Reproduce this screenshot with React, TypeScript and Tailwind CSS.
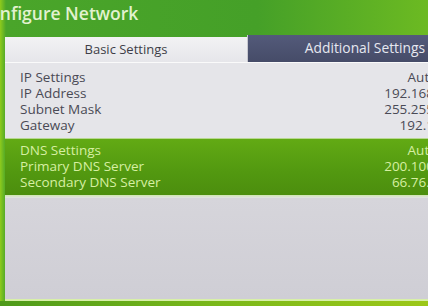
import React from "react";

const topRows = [
  ["IP Settings", "Automatic"],
  ["IP Address", "192.168.1.100"],
  ["Subnet Mask", "255.255.255.0"],
  ["Gateway", "192.168.1.1"],
];

const dnsRows = [
  ["DNS Settings", "Automatic"],
  ["Primary DNS Server", "200.100.100.1"],
  ["Secondary DNS Server", "66.76.100.10"],
];

export default function App() {
  return (
    <div
      className="relative w-[428px] h-[306px] overflow-hidden bg-[linear-gradient(90deg,#8fcb1c_0px,#4aa52a_6px,#45a028_60%,#6cba22_100%)]"
      style={{ fontFamily: '"Open Sans", "Noto Sans", sans-serif' }}
    >
      {/* Title */}
      <div className="h-[35px]">
        <h1 className="ml-[-22px] pt-[1px] text-[17.5px] leading-[24px] font-semibold text-[#e2f2cf] whitespace-nowrap">
          Configure Network
        </h1>
      </div>

      {/* Panel */}
      <div className="ml-[5px] w-[475px]">
        {/* Tabs */}
        <div className="flex h-[27px] items-end">
          <div className="w-[242px] h-[25px] bg-[linear-gradient(#f2f2f4,#e6e6ea)] flex items-center justify-center text-[13px] text-[#3e3e48]">
            Basic Settings
          </div>
          <div className="flex-1 h-[27px] bg-[linear-gradient(#535a7a,#464c68)] flex items-center justify-end pr-[55px] text-[13.8px] text-[#e6e8f0] border-l border-[#c8c8d0]">
            Additional Settings
          </div>
        </div>
        <div className="h-[1px] bg-[#fafafa]" />

        {/* Basic section */}
        <div className="bg-[#e5e5e9] pt-[6px] pb-[5px] text-[13.5px] leading-[16px] text-[#4a4a55]">
          {topRows.map(([label, value]) => (
            <div key={label} className="flex justify-between pl-[15px] pr-[8px]">
              <span>{label}</span>
              <span>{value}</span>
            </div>
          ))}
        </div>

        {/* DNS section (selected) */}
        <div className="h-[1px] bg-[#b8d890]" />
        <div className="h-[56px] bg-[linear-gradient(#62aa14,#529810_60%,#4c8e0e)] pt-[3px] text-[13.5px] leading-[16px] text-[#d6efa2]">
          {dnsRows.map(([label, value]) => (
            <div key={label} className="flex justify-between pl-[15px] pr-[8px]">
              <span>{label}</span>
              <span>{value}</span>
            </div>
          ))}
        </div>
        <div className="h-[3px] bg-[linear-gradient(#cfe6b0,#e2e2e6)]" />

        {/* Empty area */}
        <div className="h-[101px] bg-[linear-gradient(#d6d5db,#cfced5)]" />
        <div className="h-[2px] bg-[#d8f0a8]" />
      </div>
      <div className="h-[6px] bg-[linear-gradient(90deg,#4e9a1a,#7ab81a_50%,#9cc818)]" />
    </div>
  );
}
